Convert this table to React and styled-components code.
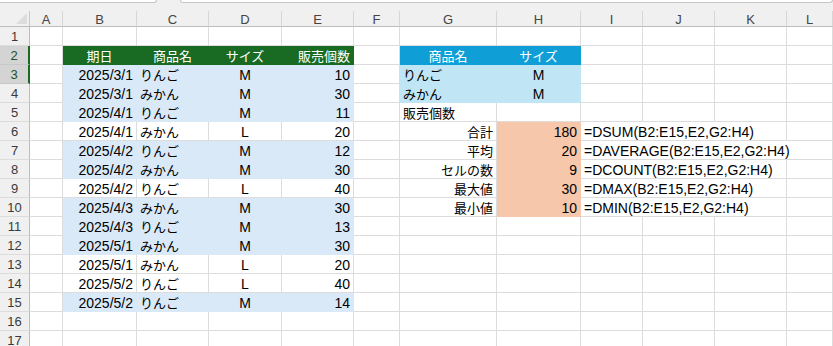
import styled, { createGlobalStyle } from "styled-components";

const GlobalStyle = createGlobalStyle`
  body {
    margin: 0;
    background: #fff;
    font-family: "Liberation Sans", "Noto Sans CJK JP", sans-serif;
  }
`;

const GREEN = "#196b24";
const CYAN = "#0f9ed5";
const LIGHT_CYAN = "#c0e6f5";
const BAND = "#dae9f8";
const PEACH = "#f7c7ac";
const GRID = "#dcdcdc";

const COLS = ["A", "B", "C", "D", "E", "F", "G", "H", "I", "J", "K", "L"];

const Page = styled.div`
  width: 833px;
  height: 346px;
  overflow: hidden;
  background: #f0f0f0;
`;

const TopBar = styled.div`
  height: 11px;
  display: flex;
  gap: 23px;
  margin-left: -2px;
`;

const InputBox = styled.div`
  height: 2px;
  width: ${(p) => p.$w || "auto"};
  flex: ${(p) => (p.$w ? "none" : "1")};
  background: #fff;
  border: 1px solid #c6c6c6;
  border-top: none;
  border-radius: 0 0 4px 4px;
`;

const Sheet = styled.div`
  display: grid;
  grid-template-columns: 30px 33px 74px 72px 73px 72px 46px 97px 84px 62px 72px 72px 1fr;
  grid-template-rows: 16px;
  grid-auto-rows: 19px;
  background: #fff;
`;

const Corner = styled.div`
  box-sizing: border-box;
  background: #f0f0f0;
  border-right: 1px solid #c8c8c8;
  border-bottom: 1px solid #bdbdbd;
  display: flex;
  align-items: flex-end;
  justify-content: flex-end;
  padding: 0 2px 2px 0;
`;

const ColHead = styled.div`
  box-sizing: border-box;
  background: #f0f0f0;
  border-right: 1px solid #d6d6d6;
  border-bottom: 1px solid #bdbdbd;
  display: flex;
  align-items: center;
  justify-content: center;
  font-size: 13px;
  color: #444;
  padding-top: 1px;
`;

const RowHead = styled.div`
  box-sizing: border-box;
  background: ${(p) => (p.$sel ? "#d4d4d4" : "#f0f0f0")};
  border-right: ${(p) => (p.$sel ? `2px solid ${GREEN}` : "1px solid #bdbdbd")};
  border-bottom: 1px solid ${(p) => (p.$sel ? "#c8c8c8" : GRID)};
  display: flex;
  align-items: center;
  justify-content: center;
  font-size: 13px;
  color: ${(p) => (p.$sel ? "#1d5128" : "#3a3a3a")};
  padding-top: 1px;
`;

const Cell = styled.div`
  box-sizing: border-box;
  grid-column: span ${(p) => p.$span || 1};
  background: ${(p) => p.$bg || "#fff"};
  border-right: 1px solid ${(p) => p.$bg || GRID};
  border-bottom: 1px solid ${(p) => p.$bg || GRID};
  color: ${(p) => p.$fg || "#000"};
  display: flex;
  align-items: center;
  justify-content: ${(p) =>
    p.$al === "c" ? "center" : p.$al === "r" ? "flex-end" : "flex-start"};
  padding: 1px 3px 0 3px;
  font-size: ${(p) => (p.$jp ? "13px" : "14px")};
  white-space: nowrap;
  overflow: visible;
  min-width: 0;
`;

const mainRows = [
  ["2025/3/1", "りんご", "M", 10],
  ["2025/3/1", "みかん", "M", 30],
  ["2025/4/1", "りんご", "M", 11],
  ["2025/4/1", "みかん", "L", 20],
  ["2025/4/2", "りんご", "M", 12],
  ["2025/4/2", "みかん", "M", 30],
  ["2025/4/2", "りんご", "L", 40],
  ["2025/4/3", "みかん", "M", 30],
  ["2025/4/3", "りんご", "M", 13],
  ["2025/5/1", "みかん", "M", 30],
  ["2025/5/1", "みかん", "L", 20],
  ["2025/5/2", "りんご", "L", 40],
  ["2025/5/2", "りんご", "M", 14],
];

const stats = [
  ["合計", 180, "=DSUM(B2:E15,E2,G2:H4)", 3],
  ["平均", 20, "=DAVERAGE(B2:E15,E2,G2:H4)", 4],
  ["セルの数", 9, "=DCOUNT(B2:E15,E2,G2:H4)", 3],
  ["最大値", 30, "=DMAX(B2:E15,E2,G2:H4)", 3],
  ["最小値", 10, "=DMIN(B2:E15,E2,G2:H4)", 3],
];

function buildRows() {
  const rows = Array.from({ length: 17 }, () => ({}));
  rows[1] = {
    B: { t: "期日", al: "c", bg: GREEN, fg: "#fff" },
    C: { t: "商品名", al: "c", bg: GREEN, fg: "#fff" },
    D: { t: "サイズ", al: "c", bg: GREEN, fg: "#fff" },
    E: { t: "販売個数", al: "r", bg: GREEN, fg: "#fff" },
    G: { t: "商品名", al: "c", bg: CYAN, fg: "#fff" },
    H: { t: "サイズ", al: "c", bg: CYAN, fg: "#fff" },
  };
  mainRows.forEach(([date, name, size, qty], i) => {
    const bg = size === "M" ? BAND : null;
    Object.assign(rows[i + 2], {
      B: { t: date, al: "r", bg },
      C: { t: name, al: "l", bg },
      D: { t: size, al: "c", bg },
      E: { t: String(qty), al: "r", bg },
    });
  });
  rows[2].G = { t: "りんご", al: "l", bg: LIGHT_CYAN };
  rows[2].H = { t: "M", al: "c", bg: LIGHT_CYAN };
  rows[3].G = { t: "みかん", al: "l", bg: LIGHT_CYAN };
  rows[3].H = { t: "M", al: "c", bg: LIGHT_CYAN };
  rows[4].G = { t: "販売個数", al: "l" };
  stats.forEach(([label, val, formula, span], i) => {
    Object.assign(rows[i + 5], {
      G: { t: label, al: "r" },
      H: { t: String(val), al: "r", bg: PEACH },
      I: { t: formula, al: "l", span },
    });
  });
  return rows;
}

const rows = buildRows();
const hasJp = (t) => /[^\x00-\x7f]/.test(t);

function CornerMark() {
  return (
    <svg width="11" height="11" viewBox="0 0 11 11">
      <polygon points="11,0 11,11 0,11" fill="#dcdcdc" />
    </svg>
  );
}

function SheetRow({ index, cells }) {
  const out = [];
  let skip = 0;
  COLS.forEach((col) => {
    if (skip > 0) {
      skip--;
      return;
    }
    const c = cells[col];
    if (!c) {
      out.push(<Cell key={col} />);
      return;
    }
    if (c.span) skip = c.span - 1;
    out.push(
      <Cell
        key={col}
        $al={c.al}
        $bg={c.bg}
        $fg={c.fg}
        $span={c.span}
        $jp={hasJp(c.t)}
      >
        {c.t}
      </Cell>
    );
  });
  return (
    <>
      <RowHead $sel={index === 2 || index === 3}>{index}</RowHead>
      {out}
    </>
  );
}

export default function App() {
  return (
    <Page>
      <GlobalStyle />
      <TopBar>
        <InputBox $w="157px" />
        <InputBox />
      </TopBar>
      <Sheet>
        <Corner>
          <CornerMark />
        </Corner>
        {COLS.map((c) => (
          <ColHead key={c}>{c}</ColHead>
        ))}
        {rows.map((cells, i) => (
          <SheetRow key={i} index={i + 1} cells={cells} />
        ))}
      </Sheet>
    </Page>
  );
}
